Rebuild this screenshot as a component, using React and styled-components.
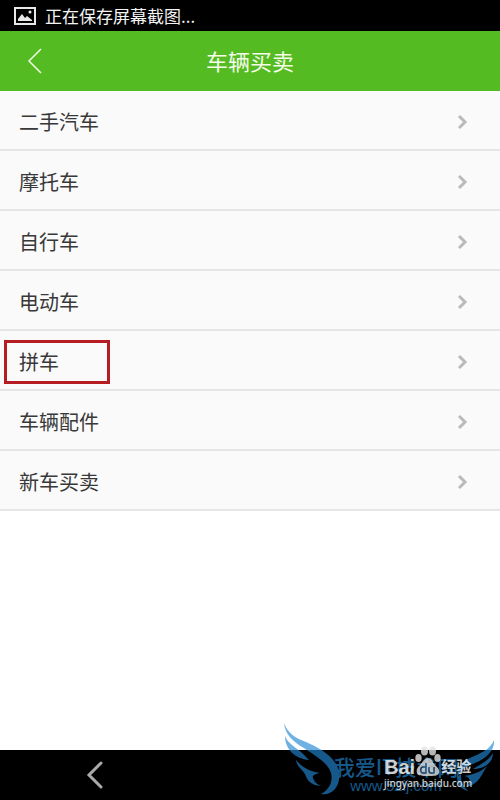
import React from 'react';
import styled, { createGlobalStyle } from 'styled-components';

const Global = createGlobalStyle`
  * { box-sizing: border-box; }
  body { margin: 0; background: #fff; font-family: "Noto Sans CJK SC", sans-serif; }
`;
const Page = styled.div`
  min-height: 100vh;
  display: flex;
  flex-direction: column;
`;
const StatusBar = styled.div`
  height: 31px;
  padding: 0 14px;
  display: flex;
  align-items: center;
  gap: 9px;
  background: #000;
  color: #f4f4f4;
  font-size: 17px;
  line-height: 24px;
`;
const Header = styled.header`
  height: 60px;
  display: grid;
  grid-template-columns: 70px 1fr 70px;
  align-items: center;
  background: #54bb22;
  color: #f4fbe8;
`;
const IconButton = styled.button`
  display: flex;
  align-items: center;
  justify-content: center;
  height: 50px;
  padding: 0;
  border: 0;
  background: none;
  color: inherit;
  cursor: pointer;
`;
const Title = styled.h1`
  margin: 0;
  padding-bottom: 2px;
  font-size: 22px;
  font-weight: 400;
  line-height: 32px;
  text-align: center;
`;
const List = styled.ul`
  margin: 0;
  padding: 0;
  list-style: none;
`;
const Item = styled.li`
  border-bottom: 2px solid #e6e6e6;
  background: #fafafa;
`;
const ItemLink = styled.a`
  height: 58px;
  padding: 3px 32px 0 4px;
  display: flex;
  align-items: center;
  justify-content: space-between;
  color: #383838;
  text-decoration: none;
`;
const Label = styled.span`
  min-width: 106px;
  height: 44px;
  padding: 0 12px;
  border: 3px solid ${({ $marked }) => ($marked ? '#b51d22' : 'transparent')};
  font-size: 20px;
  line-height: 38px;
`;
const NavBar = styled.footer`
  position: relative;
  height: 50px;
  margin-top: auto;
  padding-left: 60px;
  display: flex;
  background: #000;
  color: #aaa;
`;
const NavButton = styled(IconButton)`
  width: 70px;
`;
const WingMark = styled.div`
  position: absolute;
  right: 0;
  bottom: 0;
  width: 220px;
  height: 80px;
  color: #2288d4;
  opacity: 0.65;
`;
const Wings = styled.svg`
  position: absolute;
  inset: 0;
`;
const WingText = styled.div`
  padding: 34px 38px 0 50px;
  text-align: center;
  white-space: nowrap;
`;
const WingName = styled.div`
  font-size: 21px;
  font-weight: 500;
  line-height: 24px;
`;
const WingSite = styled.div`
  font-family: "Liberation Sans", sans-serif;
  font-size: 15px;
  line-height: 16px;
`;
const BaiduMark = styled.div`
  position: absolute;
  right: 26px;
  bottom: 11px;
  width: 90px;
  color: #fff;
  opacity: 0.8;
  white-space: nowrap;
`;
const BaiduName = styled.div`
  display: flex;
  align-items: flex-end;
  font-family: "Liberation Sans", "Noto Sans CJK SC", sans-serif;
  font-size: 20px;
  font-weight: 700;
  line-height: 20px;
`;
const BaiduTopic = styled.span`
  font-size: 15px;
`;
const BaiduSite = styled.div`
  font-family: "Noto Sans", sans-serif;
  font-size: 10px;
  font-weight: 500;
  line-height: 12px;
`;

const items = ['二手汽车', '摩托车', '自行车', '电动车', '拼车', '车辆配件', '新车买卖'];

const PictureIcon = () => (
  <svg width="22" height="18" viewBox="0 0 22 18" aria-hidden="true">
    <path d="M1 1h20v16H1z" fill="none" stroke="#e8e8e8" strokeWidth="2" />
    <path d="M4 14v-2l4-5 3 4 2-2 5 4v1z" fill="#e8e8e8" />
    <circle cx="16" cy="5" r="1.5" fill="#e8e8e8" />
  </svg>
);

const Paw = () => (
  <svg width="26" height="31" viewBox="0 0 26 31" aria-hidden="true">
    <g fill="#e4e4e4">
      <ellipse cx="3.5" cy="12" rx="3.2" ry="4" />
      <ellipse cx="9.5" cy="5" rx="3.5" ry="4.5" />
      <ellipse cx="17.5" cy="5" rx="3.5" ry="4.5" />
      <ellipse cx="22.5" cy="12" rx="3.2" ry="4" />
      <path d="M13 12c-4 0-5 4-8 7s-4 5-3 8 5 3 11 3 10 0 11-3-1-5-4-8-3-7-7-7z" />
    </g>
    <g fill="none" stroke="#1d4f78" strokeWidth="1.5">
      <path d="M11 17v10H8c-3 0-3-6 0-6h3M14 21v4c0 2 1 2 2 2h3v-6" />
    </g>
  </svg>
);

export default function App() {
  return (
    <Page>
      <Global />
      <StatusBar><PictureIcon /><span>正在保存屏幕截图...</span></StatusBar>
      <Header>
        <IconButton aria-label="返回">
          <svg width="16" height="26" viewBox="0 0 16 26" fill="none" stroke="currentColor" strokeWidth="1.5"><path d="M14 1L2 13l12 12" /></svg>
        </IconButton>
        <Title>车辆买卖</Title>
      </Header>
      <List>
        {items.map((item) => (
          <Item key={item}>
            <ItemLink href="#">
              <Label $marked={item === '拼车'}>{item}</Label>
              <svg width="10" height="16" viewBox="0 0 10 16" fill="none" stroke="#bababa" strokeWidth="3" aria-hidden="true"><path d="M1 2l6 6-6 6" /></svg>
            </ItemLink>
          </Item>
        ))}
      </List>
      <NavBar>
        <NavButton aria-label="后退">
          <svg width="18" height="28" viewBox="0 0 18 28" fill="none" stroke="currentColor" strokeWidth="3" strokeLinecap="round"><path d="M15 2L3 14l12 12" /></svg>
        </NavButton>
        <WingMark>
          <Wings width="220" height="80" viewBox="280 720 220 80" fill="currentColor" aria-hidden="true">
            <path d="M284 723C288 734 296 738 306 742C320 748 337 758 339 772C341 785 333 796 321 794C330 789 333 781 331 773C328 763 317 757 304 748C293 742 285 734 284 723z" />
            <path d="M285 736C289 746 299 748 309 760C296 759 285 750 285 736z" />
            <path d="M296 760C303 768 309 771 320 773C314 774 312 776 313 778C315 783 318 785 321 786C309 785 307 779 305 774C302 769 297 767 296 760z" />
            <path d="M494 740C491 748 484 752 472 757C462 761 456 768 457 779C460 770 467 766 475 763C487 758 495 750 494 740z" />
            <path d="M493 753C489 760 483 763 473 769C484 769 493 763 493 753zM487 766C481 772 475 774 464 776C470 777 472 781 466 787C479 784 480 777 487 766z" />
            <path d="M457 777C457 785 461 789 468 791C461 784 461 780 461 774z" />
          </Wings>
          <WingText><WingName>我爱IT技术网</WingName><WingSite>www.52ij.com</WingSite></WingText>
        </WingMark>
        <BaiduMark>
          <BaiduName>Bai<Paw /><BaiduTopic>经验</BaiduTopic></BaiduName>
          <BaiduSite>jingyan.baidu.com</BaiduSite>
        </BaiduMark>
      </NavBar>
    </Page>
  );
}
